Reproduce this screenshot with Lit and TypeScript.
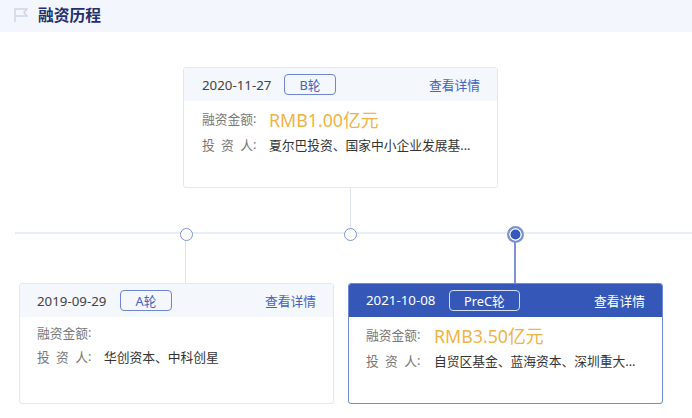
import { LitElement, html, css, svg } from "lit";
import { customElement, property } from "lit/decorators.js";

const FONT = css`"Noto Sans", "Noto Sans CJK SC", sans-serif`;

@customElement("round-card")
class RoundCard extends LitElement {
  @property() date = "";
  @property() round = "";
  @property() amount = "";
  @property() investors = "";
  @property({ type: Boolean, reflect: true }) active = false;

  static styles = css`
    :host {
      display: block;
      width: 315px;
      height: 121px;
      box-sizing: border-box;
      border: 1px solid #e3e7f1;
      border-radius: 3px;
      background: #fff;
      overflow: hidden;
      font-family: ${FONT};
    }
    :host([active]) {
      border-color: #6f89d3;
    }
    .head {
      display: flex;
      align-items: center;
      height: 33px;
      padding: 0 17px 0 var(--inset, 18px);
      background: #f4f7fc;
      font-size: 12.75px;
      color: #444;
    }
    :host([active]) .head {
      background: #3557b7;
      color: #fff;
      margin: -1px -1px 0;
      height: 34px;
      padding: 0 18px 0 calc(var(--inset, 18px) + 1px);
    }
    .date {
      width: calc(100px - var(--inset, 18px));
      font-size: 13.3px;
    }
    .tag {
      height: 21px;
      line-height: 20px;
      box-sizing: border-box;
      padding: 0 14px;
      min-width: 52px;
      text-align: center;
      border: 1px solid #6f86d0;
      border-radius: 4px;
      color: #4463c0;
    }
    :host([active]) .tag {
      border-color: #d5ddf2;
      color: #fff;
    }
    .link {
      margin-left: auto;
      color: #4463c0;
    }
    :host([active]) .link {
      color: #fff;
    }
    .body {
      padding: 4px 0 0 var(--inset, 18px);
    }
    .row {
      display: flex;
      align-items: center;
      font-size: 12.75px;
      color: #333;
    }
    .amount-row {
      height: 27px;
    }
    .amount-row.empty {
      height: 23px;
    }
    .inv-row {
      height: 25px;
    }
    .label {
      flex: none;
      width: var(--label, 67px);
      color: #777;
      display: flex;
    }
    .name {
      width: 51px;
      text-align-last: justify;
    }
    .amount {
      font-size: 17.8px;
      color: #efb346;
    }
    .inv {
      white-space: nowrap;
    }
  `;

  render() {
    return html`
      <div class="head">
        <span class="date">${this.date}</span>
        <span class="tag">${this.round}</span>
        <span class="link">查看详情</span>
      </div>
      <div class="body">
        <div class="row amount-row ${this.amount ? "" : "empty"}">
          <span class="label"><span class="name">融资金额</span>:</span>
          <span class="amount">${this.amount}</span>
        </div>
        <div class="row inv-row">
          <span class="label"><span class="name">投资人</span>:</span>
          <span class="inv">${this.investors}</span>
        </div>
      </div>
    `;
  }
}

@customElement("app-root")
class AppRoot extends LitElement {
  static styles = css`
    :host {
      display: block;
      width: 692px;
      height: 418px;
      background: #fff;
      overflow: hidden;
      font-family: ${FONT};
    }
    .title-bar {
      display: flex;
      align-items: center;
      gap: 10px;
      height: 32px;
      box-sizing: border-box;
      padding: 0 0 3px 14px;
      background: #f3f7fd;
    }
    .title-bar svg {
      display: block;
    }
    h2 {
      margin: 0;
      font-size: 15.75px;
      font-weight: 700;
      color: #232f6e;
    }
    .canvas {
      position: relative;
      height: 386px;
    }
    .axis {
      position: absolute;
      left: 15px;
      right: 0;
      top: 200px;
      height: 2px;
      background: #e9edf4;
    }
    .stem {
      position: absolute;
      width: 1px;
      background: #dde1f0;
    }
    .stem.on {
      width: 2px;
      background: #7d93d6;
    }
    .dot {
      position: absolute;
      box-sizing: border-box;
      width: 13px;
      height: 13px;
      border: 1.5px solid #7d93d6;
      border-radius: 50%;
      background: #fff;
    }
    .dot.on {
      width: 17px;
      height: 17px;
      border: 2px solid #7d93d6;
      background: #3557b7;
      box-shadow: inset 0 0 0 1.5px #fff;
    }
    round-card {
      position: absolute;
    }
    .c1 { left: 183px; top: 35px; }
    .c2 { left: 19px; top: 251px; --inset: 17px; }
    .c3 { left: 348px; top: 251px; --inset: 17px; --label: 68px; }
    .s1 { left: 350px; top: 156px; height: 45px; }
    .s2 { left: 185px; top: 202px; height: 49px; }
    .s3 { left: 514px; top: 202px; height: 49px; }
    .d1 { left: 180px; top: 196px; }
    .d2 { left: 344px; top: 196px; }
    .d3 { left: 507px; top: 194px; }
  `;

  render() {
    return html`
      <div class="title-bar">
        <svg width="14" height="14" viewBox="0 0 14 14" fill="none" stroke="#ccd6e6" stroke-width="1.5">
          ${svg`<path d="M1 14V1H13L10 4.5L13 8H1" />`}
        </svg>
        <h2>融资历程</h2>
      </div>
      <div class="canvas">
        <div class="axis"></div>
        <div class="stem s1"></div>
        <div class="stem s2"></div>
        <div class="stem on s3"></div>
        <div class="dot d1"></div>
        <div class="dot d2"></div>
        <div class="dot on d3"></div>
        <round-card class="c1" date="2020-11-27" round="B轮" amount="RMB1.00亿元"
          investors="夏尔巴投资、国家中小企业发展基..."></round-card>
        <round-card class="c2" date="2019-09-29" round="A轮" amount=""
          investors="华创资本、中科创星"></round-card>
        <round-card class="c3" active date="2021-10-08" round="PreC轮" amount="RMB3.50亿元"
          investors="自贸区基金、蓝海资本、深圳重大..."></round-card>
      </div>
    `;
  }
}
